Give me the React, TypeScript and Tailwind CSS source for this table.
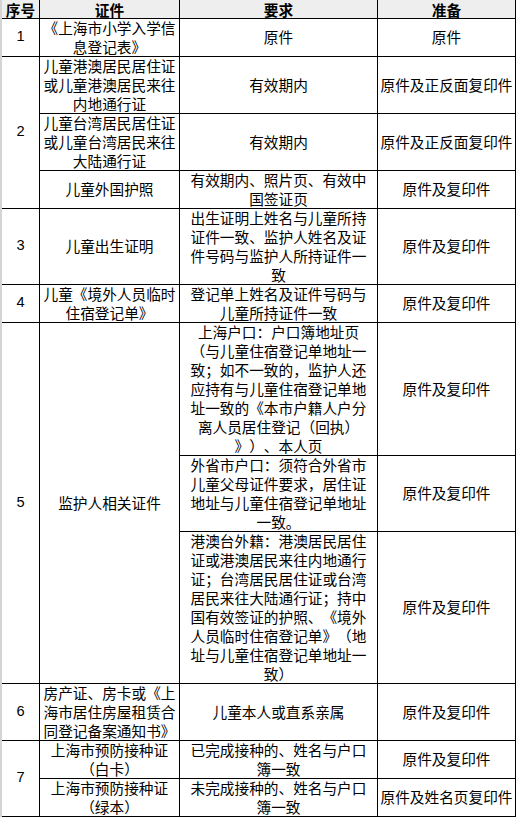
import React from "react";

type CellProps = {
  r: string;
  c: string;
  lines: string[];
  num?: boolean;
  head?: boolean;
};

function Cell({ r, c, lines, num, head }: CellProps) {
  return (
    <div
      className={`${r} ${c} flex flex-col items-center justify-center text-center ${
        head ? "bg-[#eeeeee] font-bold" : "bg-white pb-[2px]"
      } ${num ? "font-['Liberation_Sans',sans-serif]" : ""}`}
    >
      {lines.map((l, i) => (
        <div key={i} className={`whitespace-nowrap ${head ? "leading-[17px]" : "leading-[19px]"}`}>
          {l}
        </div>
      ))}
    </div>
  );
}

export default function App() {
  return (
    <div className="bg-white w-[518px] h-[817px] font-['Noto_Sans_CJK_SC','Noto_Sans',sans-serif] text-[14.67px] text-black [text-spacing-trim:space-all]">
      <div className="grid w-[516px] grid-cols-[37px_139px_197px_137px] grid-rows-[18px_37px_56px_56px_37px_75px_37px_132px_75px_151px_56px_37px_37px] gap-px bg-black border-l-2 border-[#d4d4d4] pr-px pb-px">
        <Cell r="row-start-1" c="col-start-1" head lines={["序号"]} />
        <Cell r="row-start-1" c="col-start-2" head lines={["证件"]} />
        <Cell r="row-start-1" c="col-start-3" head lines={["要求"]} />
        <Cell r="row-start-1" c="col-start-4" head lines={["准备"]} />

        <Cell r="row-start-2" c="col-start-1" num lines={["1"]} />
        <Cell r="row-start-2" c="col-start-2" lines={["《上海市小学入学信", "息登记表》"]} />
        <Cell r="row-start-2" c="col-start-3" lines={["原件"]} />
        <Cell r="row-start-2" c="col-start-4" lines={["原件"]} />

        <Cell r="row-start-3 row-span-3" c="col-start-1" num lines={["2"]} />
        <Cell r="row-start-3" c="col-start-2" lines={["儿童港澳居民居住证", "或儿童港澳居民来往", "内地通行证"]} />
        <Cell r="row-start-3" c="col-start-3" lines={["有效期内"]} />
        <Cell r="row-start-3" c="col-start-4" lines={["原件及正反面复印件"]} />

        <Cell r="row-start-4" c="col-start-2" lines={["儿童台湾居民居住证", "或儿童台湾居民来往", "大陆通行证"]} />
        <Cell r="row-start-4" c="col-start-3" lines={["有效期内"]} />
        <Cell r="row-start-4" c="col-start-4" lines={["原件及正反面复印件"]} />

        <Cell r="row-start-5" c="col-start-2" lines={["儿童外国护照"]} />
        <Cell r="row-start-5" c="col-start-3" lines={["有效期内、照片页、有效中", "国签证页"]} />
        <Cell r="row-start-5" c="col-start-4" lines={["原件及复印件"]} />

        <Cell r="row-start-6" c="col-start-1" num lines={["3"]} />
        <Cell r="row-start-6" c="col-start-2" lines={["儿童出生证明"]} />
        <Cell
          r="row-start-6"
          c="col-start-3"
          lines={["出生证明上姓名与儿童所持", "证件一致、监护人姓名及证", "件号码与监护人所持证件一", "致"]}
        />
        <Cell r="row-start-6" c="col-start-4" lines={["原件及复印件"]} />

        <Cell r="row-start-7" c="col-start-1" num lines={["4"]} />
        <Cell r="row-start-7" c="col-start-2" lines={["儿童《境外人员临时", "住宿登记单》"]} />
        <Cell r="row-start-7" c="col-start-3" lines={["登记单上姓名及证件号码与", "儿童所持证件一致"]} />
        <Cell r="row-start-7" c="col-start-4" lines={["原件及复印件"]} />

        <Cell r="row-start-8 row-span-3" c="col-start-1" num lines={["5"]} />
        <Cell r="row-start-8 row-span-3" c="col-start-2" lines={["监护人相关证件"]} />
        <Cell
          r="row-start-8"
          c="col-start-3"
          lines={[
            "上海户口：户口簿地址页",
            "（与儿童住宿登记单地址一",
            "致；如不一致的，监护人还",
            "应持有与儿童住宿登记单地",
            "址一致的《本市户籍人户分",
            "离人员居住登记（回执）",
            "》）、本人页",
          ]}
        />
        <Cell r="row-start-8" c="col-start-4" lines={["原件及复印件"]} />

        <Cell
          r="row-start-9"
          c="col-start-3"
          lines={["外省市户口：须符合外省市", "儿童父母证件要求，居住证", "地址与儿童住宿登记单地址", "一致。"]}
        />
        <Cell r="row-start-9" c="col-start-4" lines={["原件及复印件"]} />

        <Cell
          r="row-start-10"
          c="col-start-3"
          lines={[
            "港澳台外籍：港澳居民居住",
            "证或港澳居民来往内地通行",
            "证；台湾居民居住证或台湾",
            "居民来往大陆通行证；持中",
            "国有效签证的护照、《境外",
            "人员临时住宿登记单》（地",
            "址与儿童住宿登记单地址一",
            "致）",
          ]}
        />
        <Cell r="row-start-10" c="col-start-4" lines={["原件及复印件"]} />

        <Cell r="row-start-11" c="col-start-1" num lines={["6"]} />
        <Cell r="row-start-11" c="col-start-2" lines={["房产证、房卡或《上", "海市居住房屋租赁合", "同登记备案通知书》"]} />
        <Cell r="row-start-11" c="col-start-3" lines={["儿童本人或直系亲属"]} />
        <Cell r="row-start-11" c="col-start-4" lines={["原件及复印件"]} />

        <Cell r="row-start-12 row-span-2" c="col-start-1" num lines={["7"]} />
        <Cell r="row-start-12" c="col-start-2" lines={["上海市预防接种证", "（白卡）"]} />
        <Cell r="row-start-12" c="col-start-3" lines={["已完成接种的、姓名与户口", "簿一致"]} />
        <Cell r="row-start-12" c="col-start-4" lines={["原件及复印件"]} />

        <Cell r="row-start-13" c="col-start-2" lines={["上海市预防接种证", "（绿本）"]} />
        <Cell r="row-start-13" c="col-start-3" lines={["未完成接种的、姓名与户口", "簿一致"]} />
        <Cell r="row-start-13" c="col-start-4" lines={["原件及姓名页复印件"]} />
      </div>
    </div>
  );
}
